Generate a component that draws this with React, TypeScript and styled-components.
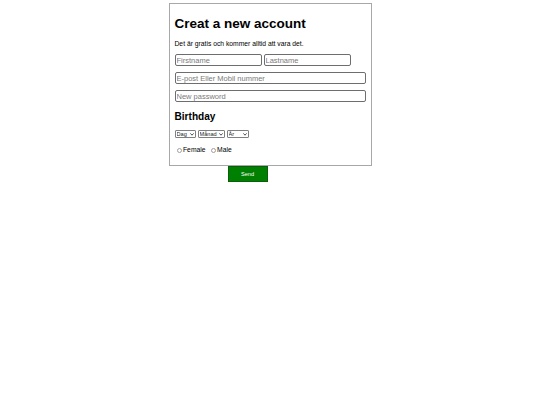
import React from "react";
import styled, { createGlobalStyle } from "styled-components";

const Global = createGlobalStyle`
  html, body { margin: 0; padding: 0; background: #fff; }
  body { font-family: "Liberation Sans", Arial, sans-serif; color: #000; }
`;

const Page = styled.div`
  width: 540px;
  padding-top: 3px;
`;

const Card = styled.form`
  box-sizing: border-box;
  width: 203px;
  margin: 0 auto;
  border: 1px solid #a8a8a8;
  padding: 0 5px 11px 5px;
`;

const Title = styled.h1`
  margin: 10px 0 0;
  font-size: 13.5px;
  line-height: 20px;
  font-weight: bold;
`;

const Lead = styled.p`
  margin: 6px 0 6px;
  font-size: 6.75px;
  line-height: 8px;
`;

const Row = styled.div`
  display: flex;
  gap: 2px;
  margin-bottom: 6px;
`;

const Field = styled.input<{ $w: number }>`
  box-sizing: border-box;
  width: ${(p) => p.$w}px;
  height: 12px;
  margin: 0;
  padding: 0 1px;
  border: 1px solid #6e6e6e;
  border-radius: 2px;
  font-family: "Liberation Sans", Arial, sans-serif;
  font-size: 7.5px;
  outline: none;
  &::placeholder { color: #7a7a7a; }
`;

const Subtitle = styled.h2`
  margin: 8px 0 0;
  font-size: 10.1px;
  line-height: 13px;
  font-weight: bold;
`;

const Selects = styled.div`
  display: flex;
  gap: 2px;
  margin-top: 7px;
`;

const SelectWrap = styled.span`
  position: relative;
  display: inline-block;
  height: 8px;
`;

const Select = styled.select<{ $w: number }>`
  appearance: none;
  box-sizing: border-box;
  display: block;
  width: ${(p) => p.$w}px;
  height: 8px;
  margin: 0;
  padding: 0 0 0 1px;
  border: 1px solid #808080;
  border-radius: 1px;
  font-family: "Liberation Sans", Arial, sans-serif;
  font-size: 5.6px;
  line-height: 6px;
  color: #222;
  background: #fff;
`;

const Chevron = styled.svg`
  position: absolute;
  right: 1.5px;
  top: 2.5px;
  width: 4px;
  height: 3px;
  pointer-events: none;
`;

const Radios = styled.div`
  display: flex;
  align-items: center;
  margin-top: 8px;
  font-size: 6.75px;
  line-height: 8px;
`;

const RadioLabel = styled.label`
  display: flex;
  align-items: center;
  margin-right: 3px;
`;

const Radio = styled.input`
  appearance: none;
  box-sizing: border-box;
  width: 5px;
  height: 5px;
  margin: 0 1.5px 0 2px;
  border: 1px solid #a0a0a0;
  border-radius: 50%;
  background: #fff;
`;

const Footer = styled.div`
  width: 203px;
  margin: 0 auto;
  padding-left: 59px;
  box-sizing: border-box;
`;

const Send = styled.button`
  box-sizing: border-box;
  display: block;
  width: 40px;
  height: 16px;
  padding: 0;
  background: #008000;
  border: 1px solid #0b5e0b;
  color: #fff;
  font-family: "Liberation Sans", Arial, sans-serif;
  font-size: 5.6px;
`;

function DateSelect({ w, label }: { w: number; label: string }) {
  return (
    <SelectWrap>
      <Select $w={w}>
        <option>{label}</option>
      </Select>
      <Chevron viewBox="0 0 4 3">
        <path d="M0.4 0.4 L2 2.2 L3.6 0.4" fill="none" stroke="#222" strokeWidth="0.8" />
      </Chevron>
    </SelectWrap>
  );
}

export default function App() {
  return (
    <Page>
      <Global />
      <Card>
        <Title>Creat a new account</Title>
        <Lead>Det är gratis och kommer alltid att vara det.</Lead>
        <Row>
          <Field $w={87} placeholder="Firstname" />
          <Field $w={87} placeholder="Lastname" />
        </Row>
        <Row>
          <Field $w={191} placeholder="E-post Eller Mobil nummer" />
        </Row>
        <Row>
          <Field $w={191} type="password" placeholder="New password" />
        </Row>
        <Subtitle>Birthday</Subtitle>
        <Selects>
          <DateSelect w={21} label="Dag" />
          <DateSelect w={27} label="Månad" />
          <DateSelect w={22} label="År" />
        </Selects>
        <Radios>
          <RadioLabel>
            <Radio type="radio" name="g" />
            Female
          </RadioLabel>
          <RadioLabel>
            <Radio type="radio" name="g" />
            Male
          </RadioLabel>
        </Radios>
      </Card>
      <Footer>
        <Send type="button">Send</Send>
      </Footer>
    </Page>
  );
}
